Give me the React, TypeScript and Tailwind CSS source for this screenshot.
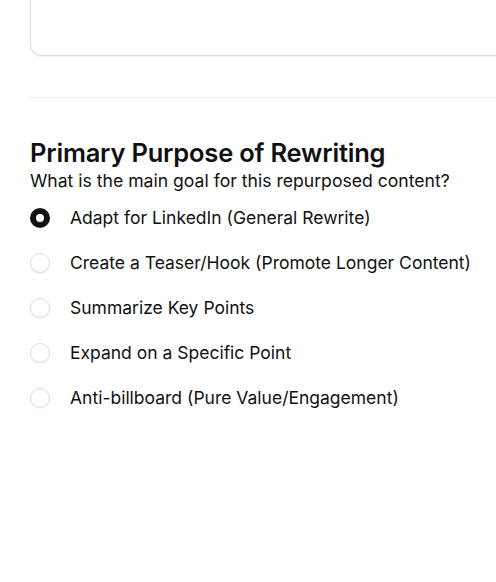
import { useState } from "react";

const OPTIONS = [
  "Adapt for LinkedIn (General Rewrite)",
  "Create a Teaser/Hook (Promote Longer Content)",
  "Summarize Key Points",
  "Expand on a Specific Point",
  "Anti-billboard (Pure Value/Engagement)",
];

const App = () => {
  const [selected, setSelected] = useState(0);
  return (
    <div
      className="relative w-[496px] h-[582px] overflow-hidden bg-white text-[#111111]"
      style={{ fontFamily: "Inter, 'Noto Sans', sans-serif" }}
    >
      <div className="w-[540px] pl-[30px]">
        <div className="-mt-[44px] h-[100px] w-full rounded-xl border border-[#dcdcdc] bg-white shadow-[0_1px_2px_rgba(0,0,0,0.08)]" />
        <div className="mt-[41px] h-px w-full bg-[#ebebeb]" />
        <div className="mt-[39px] flex flex-col">
          <h2 className="text-[25.5px] font-semibold leading-[32px] tracking-[-0.2px]">
            Primary Purpose of Rewriting
          </h2>
          <p className="text-[17.6px] leading-[23px]">
            What is the main goal for this repurposed content?
          </p>
          <div className="mt-[15px] flex flex-col gap-[23px]">
            {OPTIONS.map((label, i) => (
              <label
                key={label}
                className="flex flex-row items-center gap-[20px] cursor-pointer h-[22px]"
                onClick={() => setSelected(i)}
              >
                {selected === i ? (
                  <span className="flex h-[20px] w-[20px] shrink-0 items-center justify-center rounded-full bg-[#111111]">
                    <span className="h-[8px] w-[8px] rounded-full bg-white" />
                  </span>
                ) : (
                  <span className="h-[20px] w-[20px] shrink-0 rounded-full border border-[#dadada] bg-white shadow-[0_1px_1px_rgba(0,0,0,0.05)]" />
                )}
                <span className="text-[17.5px] leading-[22px]">{label}</span>
              </label>
            ))}
          </div>
        </div>
      </div>
    </div>
  );
};

export default App;
